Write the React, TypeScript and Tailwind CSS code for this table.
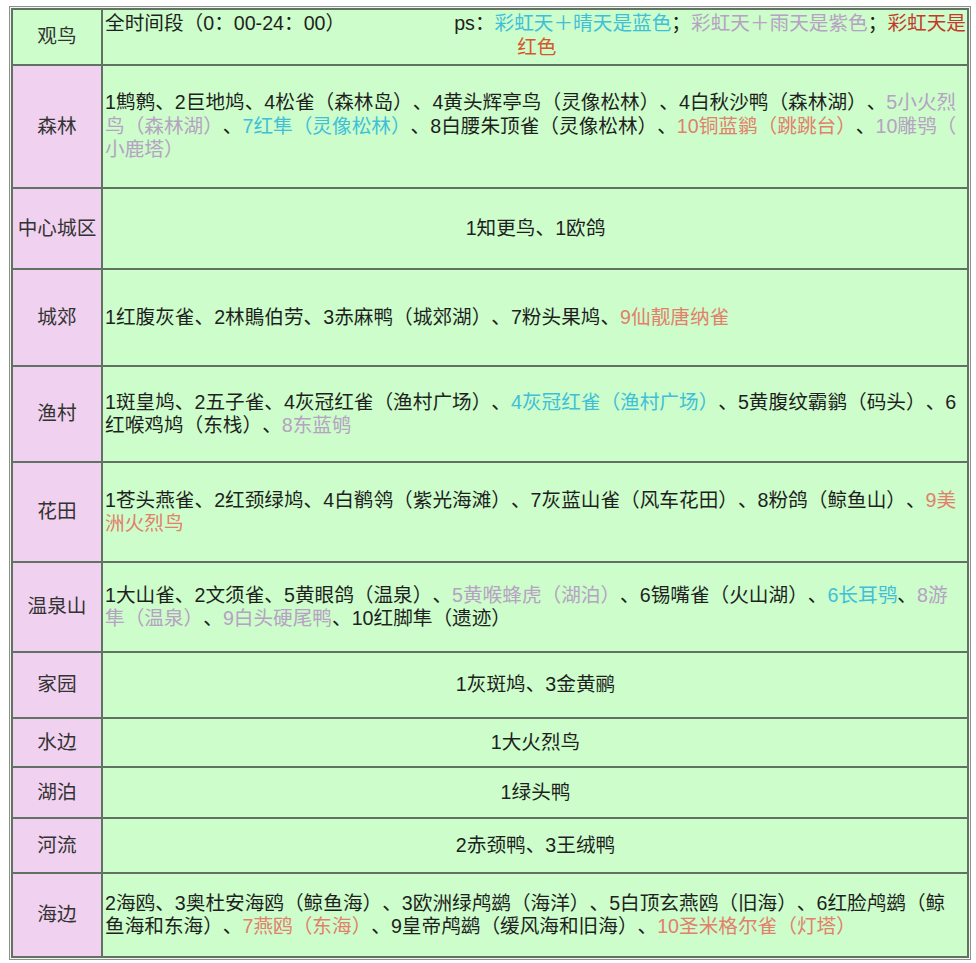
import React from "react";

type Seg = [string, "k" | "b" | "p" | "r"];

const colorClass: Record<string, string> = {
  k: "text-[#1f1f1f]",
  b: "text-[#3fc0d8]",
  p: "text-[#b7a1c4]",
  r: "text-[#e2806c]",
};

function Line({ segs }: { segs: Seg[] }) {
  return (
    <div className="whitespace-nowrap">
      {segs.map(([t, c], i) => (
        <span key={i} className={colorClass[c]}>
          {t}
        </span>
      ))}
    </div>
  );
}

type Row = {
  label: string;
  center?: boolean;
  lines: Seg[][];
};

const rows: Row[] = [
  {
    label: "森林",
    lines: [
      [
        ["1鹪鹩、2巨地鸠、4松雀（森林岛）、4黄头辉亭鸟（灵像松林）、4白秋沙鸭（森林湖）、", "k"],
        ["5小火烈", "p"],
      ],
      [
        ["鸟（森林湖）", "p"],
        ["、", "k"],
        ["7红隼（灵像松林）", "b"],
        ["、8白腰朱顶雀（灵像松林）、", "k"],
        ["10铜蓝鹟（跳跳台）", "r"],
        ["、", "k"],
        ["10雕鸮（", "p"],
      ],
      [["小鹿塔）", "p"]],
    ],
  },
  {
    label: "中心城区",
    center: true,
    lines: [[["1知更鸟、1欧鸽", "k"]]],
  },
  {
    label: "城郊",
    lines: [
      [
        ["1红腹灰雀、2林鵙伯劳、3赤麻鸭（城郊湖）、7粉头果鸠、", "k"],
        ["9仙靓唐纳雀", "r"],
      ],
    ],
  },
  {
    label: "渔村",
    lines: [
      [
        ["1斑皇鸠、2五子雀、4灰冠红雀（渔村广场）、", "k"],
        ["4灰冠红雀（渔村广场）", "b"],
        ["、5黄腹纹霸鹟（码头）、6", "k"],
      ],
      [
        ["红喉鸡鸠（东栈）、", "k"],
        ["8东蓝鸲", "p"],
      ],
    ],
  },
  {
    label: "花田",
    lines: [
      [
        ["1苍头燕雀、2红颈绿鸠、4白鹡鸰（紫光海滩）、7灰蓝山雀（风车花田）、8粉鸽（鲸鱼山）、", "k"],
        ["9美", "r"],
      ],
      [["洲火烈鸟", "r"]],
    ],
  },
  {
    label: "温泉山",
    lines: [
      [
        ["1大山雀、2文须雀、5黄眼鸽（温泉）、", "k"],
        ["5黄喉蜂虎（湖泊）", "p"],
        ["、6锡嘴雀（火山湖）、", "k"],
        ["6长耳鸮", "b"],
        ["、", "k"],
        ["8游", "p"],
      ],
      [
        ["隼（温泉）", "p"],
        ["、", "k"],
        ["9白头硬尾鸭", "p"],
        ["、10红脚隼（遗迹）", "k"],
      ],
    ],
  },
  { label: "家园", center: true, lines: [[["1灰斑鸠、3金黄鹂", "k"]]] },
  { label: "水边", center: true, lines: [[["1大火烈鸟", "k"]]] },
  { label: "湖泊", center: true, lines: [[["1绿头鸭", "k"]]] },
  { label: "河流", center: true, lines: [[["2赤颈鸭、3王绒鸭", "k"]]] },
  {
    label: "海边",
    lines: [
      [["2海鸥、3奥杜安海鸥（鲸鱼海）、3欧洲绿鸬鹚（海洋）、5白顶玄燕鸥（旧海）、6红脸鸬鹚（鲸", "k"]],
      [
        ["鱼海和东海）、", "k"],
        ["7燕鸥（东海）", "r"],
        ["、9皇帝鸬鹚（缓风海和旧海）、", "k"],
        ["10圣米格尔雀（灯塔）", "r"],
      ],
    ],
  },
];

export default function App() {
  return (
    <div
      className="min-h-[963px] bg-white pl-[9px] pt-[6px] text-[19.65px] leading-[23.5px] [text-spacing-trim:space-all]"
      style={{ fontFamily: '"Liberation Sans", "Noto Sans CJK SC", sans-serif' }}
    >
      <div className="w-[962px] border border-[#8e8e8e] bg-[#eef7ee] p-px">
        <div className="grid grid-cols-[88px_1fr] grid-rows-[54px_121px_79px_95px_94px_98px_88px_64px_47px_49px_53px_82px] gap-[2px] border-2 border-[#627262] bg-[#627262]">
          {/* header row */}
          <div className="flex items-center justify-center bg-[#ccfdca] text-[#333]">观鸟</div>
          <div className="flex justify-between bg-[#ccfdca] pl-[2px] pr-[1px] pt-[2px] text-[#1f1f1f]">
            <div className="whitespace-nowrap">全时间段（0：00-24：00）</div>
            <div>
              <div className="whitespace-nowrap">
                <span>ps：</span>
                <span className="text-[#3fc0d8]">彩虹天＋晴天是蓝色</span>
                <span>；</span>
                <span className="text-[#b7a1c4]">彩虹天＋雨天是紫色</span>
                <span>；</span>
                <span className="text-[#c23a2a]">彩虹天是</span>
              </div>
              <div className="pl-[63px] text-[#d5582c]">红色</div>
            </div>
          </div>
          {rows.map((r) => (
            <React.Fragment key={r.label}>
              <div className="flex items-center justify-center bg-[#f0d1ef] text-[#333]">{r.label}</div>
              <div
                className={
                  "flex flex-col justify-center bg-[#ccfdca] pl-[2px] pr-[1px] " +
                  (r.center ? "items-center" : "items-start")
                }
              >
                {r.lines.map((l, i) => (
                  <Line key={i} segs={l} />
                ))}
              </div>
            </React.Fragment>
          ))}
        </div>
      </div>
    </div>
  );
}
